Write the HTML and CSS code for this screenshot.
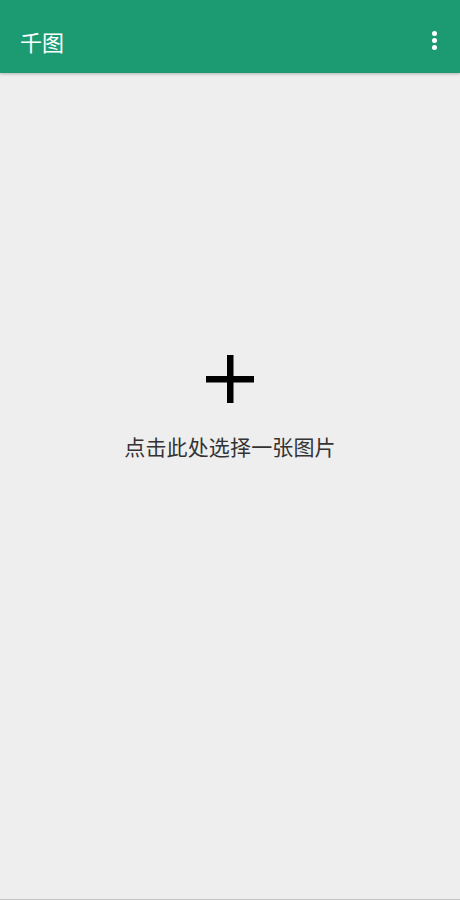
FILE: index.html
```html
<!DOCTYPE html>
<html lang="zh-CN">
<head>
<meta charset="utf-8">
<title>千图</title>
<link rel="stylesheet" href="styles.css">
</head>
<body>
<div class="page">
  <header class="appbar">
    <h1 class="title">千图</h1>
    <button class="more" aria-label="更多">
      <span class="dot"></span><span class="dot"></span><span class="dot"></span>
    </button>
  </header>
  <main class="content">
    <div class="picker">
      <svg class="plus" width="48" height="48" viewBox="0 0 48 48" aria-hidden="true">
        <rect x="0" y="21" width="48" height="6.5" fill="#000"/>
        <rect x="21" y="0" width="6.5" height="48" fill="#000"/>
      </svg>
      <p class="hint">点击此处选择一张图片</p>
    </div>
  </main>
</div>
</body>
</html>
```

FILE: styles.css
```css
html, body {
  margin: 0;
  padding: 0;
  background: #eeeeee;
  font-family: "Noto Sans CJK SC", "Noto Sans", sans-serif;
}

.page {
  height: 900px;
  display: flex;
  flex-direction: column;
}

.appbar {
  height: 73px;
  flex: 0 0 73px;
  background: #1c9b72;
  display: flex;
  align-items: flex-start;
  justify-content: space-between;
  padding: 26px 16px 0 20px;
  box-sizing: border-box;
  box-shadow: 0 1px 3px rgba(0, 0, 0, 0.25);
  position: relative;
  z-index: 1;
}

.title {
  margin: 0;
  color: #ffffff;
  font-size: 22px;
  font-weight: 400;
  line-height: 30px;
}

.more {
  border: 0;
  background: transparent;
  padding: 0;
  margin-top: 5px;
  width: 20px;
  display: flex;
  flex-direction: column;
  align-items: center;
  gap: 2px;
}

.dot {
  width: 5px;
  height: 5px;
  border-radius: 50%;
  background: #ffffff;
}

.content {
  flex: 1;
  border-bottom: 1px solid #c4c4c4;
  display: flex;
  justify-content: center;
}

.picker {
  padding-top: 282px;
  display: flex;
  flex-direction: column;
  align-items: center;
}

.plus {
  display: block;
}

.hint {
  margin: 28px 0 0;
  font-size: 21px;
  letter-spacing: 0.15px;
  line-height: 30px;
  color: #333333;
}
```
